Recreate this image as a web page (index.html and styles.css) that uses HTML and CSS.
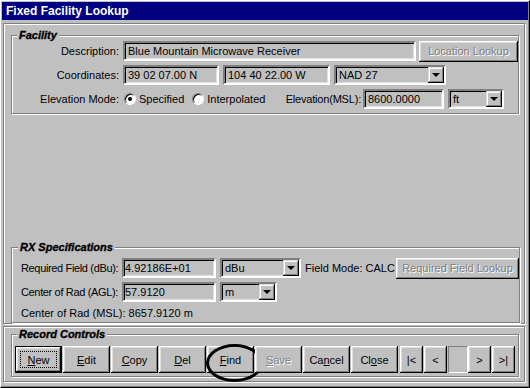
FILE: index.html
```html
<!DOCTYPE html>
<html lang="en">
<head>
    <meta charset="UTF-8">
    <title>Fixed Facility Lookup</title>
    <link rel="stylesheet" href="styles.css">
</head>
<body>
    <div class="window">
        <div class="titlebar">Fixed Facility Lookup</div>

        <div class="panel main">
            <fieldset class="group facility">
                <legend>Facility</legend>
                <div class="row">
                    <span class="lbl">Description:</span>
                    <div class="field desc">Blue Mountain Microwave Receiver</div>
                    <button class="btn disabled loc">Location Lookup</button>
                </div>
                <div class="row">
                    <span class="lbl">Coordinates:</span>
                    <div class="field lat">39 02 07.00 N</div>
                    <div class="field lon">104 40 22.00 W</div>
                    <div class="combo datum">NAD 27<span class="drop"></span></div>
                </div>
                <div class="row">
                    <span class="lbl">Elevation Mode:</span>
                    <span class="modes">
                        <span class="radio checked"></span><span class="opt">Specified</span>
                        <span class="radio"></span><span class="opt">Interpolated</span>
                    </span>
                    <span class="lbl msl">Elevation(MSL):</span>
                    <div class="field elev">8600.0000</div>
                    <div class="combo unit-ft">ft<span class="drop"></span></div>
                </div>
            </fieldset>

            <fieldset class="group rx">
                <legend>RX Specifications</legend>
                <div class="row">
                    <span class="lbl rxl">Required Field (dBu):</span>
                    <div class="field num">4.92186E+01</div>
                    <div class="combo unit-dbu">dBu<span class="drop"></span></div>
                    <span class="mode">Field Mode: CALC</span>
                    <button class="btn disabled req">Required Field Lookup</button>
                </div>
                <div class="row">
                    <span class="lbl rxl">Center of Rad (AGL):</span>
                    <div class="field num">57.9120</div>
                    <div class="combo unit-m">m<span class="drop"></span></div>
                </div>
                <div class="row text-row">Center of Rad (MSL): 8657.9120 m</div>
            </fieldset>
        </div>

        <div class="panel record">
            <fieldset class="group controls">
                <legend>Record Controls</legend>
                <div class="buttons">
                    <button class="btn cmd focused"><u>N</u>ew</button>
                    <button class="btn cmd"><u>E</u>dit</button>
                    <button class="btn cmd"><u>C</u>opy</button>
                    <button class="btn cmd"><u>D</u>el</button>
                    <button class="btn cmd circled"><u>F</u>ind</button>
                    <button class="btn cmd disabled"><u>S</u>ave</button>
                    <button class="btn cmd">Ca<u>n</u>cel</button>
                    <button class="btn cmd">Cl<u>o</u>se</button>
                    <button class="btn nav first">|&lt;</button>
                    <button class="btn nav">&lt;</button>
                    <div class="pos"></div>
                    <button class="btn nav">&gt;</button>
                    <button class="btn nav">&gt;|</button>
                </div>
            </fieldset>
        </div>
    </div>
</body>
</html>
```

FILE: styles.css
```css
* {
    box-sizing: border-box;
}
body {
    margin: 0;
    width: 530px;
    height: 388px;
    overflow: hidden;
    background: #c0c0c0;
    font: 11px "Liberation Sans", Arial, sans-serif;
    color: #000;
}
.window {
    width: 530px;
    height: 388px;
    padding: 2px 0 0 2px;
    border-left: 1px solid #fff;
    border-top: 1px solid #fff;
    border-right: 1px solid #000;
    border-bottom: 1px solid #000;
    box-shadow: inset -1px -1px 0 #808080;
}
.titlebar {
    width: 526px;
    height: 18px;
    margin-top: -1px;
    margin-left: -1px;
    padding-left: 4px;
    background: #000080;
    color: #fff;
    font-weight: bold;
    font-size: 12px;
    line-height: 19px;
}

/* etched panels */
.panel {
    width: 522px;
    border: 1px solid #808080;
    box-shadow: 1px 1px 0 #fff, inset 1px 1px 0 #fff;
}
.main {
    height: 301px;
    margin-top: 3px;
    padding: 5px 0 0 7px;
}
.record {
    height: 56px;
    margin-top: 2px;
    padding: 1px 0 0 7px;
}

/* group boxes */
.group {
    width: 508px;
    margin: 0;
    padding: 0;
    border: 1px solid #808080;
    box-shadow: 1px 1px 0 #fff, inset 1px 1px 0 #fff;
}
.group legend {
    padding: 0 2px;
    margin-left: 5px;
    background: #c0c0c0;
    font-weight: bold;
    font-style: italic;
    font-size: 11px;
    line-height: 12px;
    -webkit-text-stroke: 0.35px #000;
}
.rx {
    margin-top: 127px;
    padding: 5px 0 0 9px;
}
.rx legend {
    margin-left: -3px;
}
.controls {
    padding: 6px 0 3px 3px;
}
.controls legend {
    margin-left: 2px;
}

.row {
    display: flex;
    align-items: center;
    height: 20px;
    margin-bottom: 4px;
}
.lbl {
    width: 107px;
    margin-right: 4px;
    text-align: right;
    white-space: nowrap;
}
.modes {
    display: flex;
    align-items: center;
    width: 160px;
}
.lbl.msl {
    width: 78px;
    margin-right: 2px;
    letter-spacing: -0.2px;
}
.lbl.rxl {
    width: 100px;
    margin-right: 1px;
    text-align: left;
    letter-spacing: -0.35px;
}
.text-row {
    height: 14px;
    margin-bottom: 2px;
}

/* sunken read-only fields */
.field, .combo {
    position: relative;
    height: 20px;
    padding: 0 3px;
    line-height: 16px;
    white-space: nowrap;
    border: 2px solid;
    border-color: #808080 #fff #fff #808080;
    box-shadow: inset 1px 1px 0 #000, inset -1px -1px 0 #dfdfdf;
    margin-right: 4px;
}
.desc { width: 293px; margin-right: 3px; }
.lat { width: 96px; }
.lon { width: 107px; }
.datum { width: 112px; }
.elev { width: 81px; }
.unit-ft { width: 56px; }
.num { width: 94px; padding-left: 1px; }
.unit-dbu { width: 81px; }
.unit-m { width: 57px; }

.drop {
    position: absolute;
    top: 0;
    right: 0;
    width: 16px;
    height: 16px;
    background: #c0c0c0;
    box-shadow: inset -1px -1px 0 #000, inset 1px 1px 0 #dfdfdf, inset -2px -2px 0 #808080, inset 2px 2px 0 #fff;
}
.drop::after {
    content: "";
    position: absolute;
    left: 4px;
    top: 6px;
    border-left: 4px solid transparent;
    border-right: 4px solid transparent;
    border-top: 4px solid #000;
}

/* radios */
.radio {
    position: relative;
    width: 12px;
    height: 12px;
    margin: 0 3px 0 1px;
    border-radius: 50%;
    background: #fff;
    border: 1px solid;
    border-color: #808080 #fff #fff #808080;
    box-shadow: inset 1px 1px 0 #000;
}
.radio.checked::after {
    content: "";
    position: absolute;
    left: 3px;
    top: 3px;
    width: 4px;
    height: 4px;
    border-radius: 50%;
    background: #000;
}
.opt {
    margin-right: 7px;
}

.mode {
    width: 91px;
    white-space: nowrap;
}

/* raised buttons */
.btn {
    position: relative;
    height: 21px;
    padding: 0;
    border: none;
    background: #c0c0c0;
    font: 11px "Liberation Sans", Arial, sans-serif;
    color: #000;
    box-shadow: inset -1px -1px 0 #000, inset 1px 1px 0 #fff, inset -2px -2px 0 #808080, inset 2px 2px 0 #dfdfdf;
}
.btn.disabled {
    color: #808080;
    text-shadow: 1px 1px 0 #fff;
}
.loc { width: 99px; }
.req { width: 123px; }

.buttons {
    display: flex;
}
.cmd {
    width: 47px;
    height: 27px;
    margin-right: 1px;
}
.focused {
    border: 1px solid #000;
}
.focused::after {
    content: "";
    position: absolute;
    left: 4px;
    top: 4px;
    right: 4px;
    bottom: 4px;
    border: 1px dotted #000;
}
.circled::after {
    content: "";
    position: absolute;
    left: -1px;
    top: -2px;
    width: 51px;
    height: 32px;
    border: 3px solid #000;
    border-radius: 50%;
}
.nav {
    width: 23px;
    height: 27px;
    margin-right: 1px;
}
.first {
    margin-left: 1px;
}
.pos {
    width: 20px;
    height: 27px;
    border-top: 1px solid #808080;
    border-left: 1px solid #808080;
    border-bottom: 1px solid #fff;
    border-right: 1px solid #fff;
}
```
